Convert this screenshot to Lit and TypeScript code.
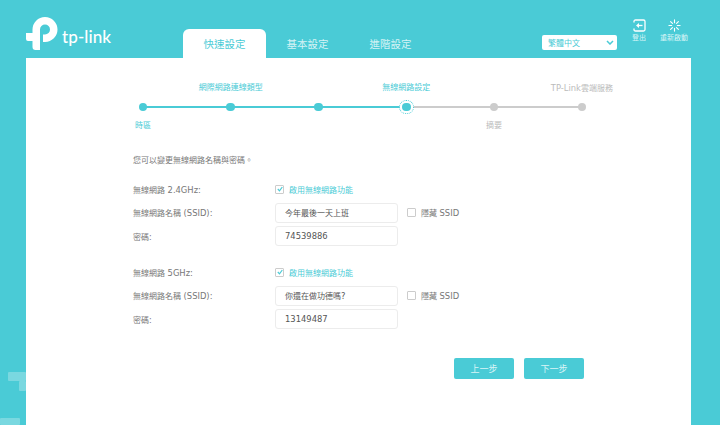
import { LitElement, html, css } from "lit";
import { customElement } from "lit/decorators.js";

const steps = [
  { top: "", bottom: "時區", state: "done" },
  { top: "網際網路連線類型", bottom: "", state: "done" },
  { top: "", bottom: "", state: "done" },
  { top: "無線網路設定", bottom: "", state: "current" },
  { top: "", bottom: "摘要", state: "todo" },
  { top: "TP-Link雲端服務", bottom: "", state: "todo" },
];

const bands = [
  { label: "無線網路 2.4GHz:", ssid: "今年最後一天上班", pass: "74539886" },
  { label: "無線網路 5GHz:", ssid: "你還在做功德嗎?", pass: "13149487" },
];

/* Latin runs are set slightly larger than the CJK ones, as in the reference. */
const mix = (t: string) =>
  t.split(/([\x21-\x7e][\x20-\x7e]*)/).map((p, i) => (i % 2 ? html`<span class="lat">${p}</span>` : p));

@customElement("app-root")
export class AppRoot extends LitElement {
  static styles = css`
    :host {
      display: block;
      position: relative;
      width: 720px;
      height: 425px;
      overflow: hidden;
      background: #4acbd6;
      font-family: "DejaVu Sans", "Noto Sans CJK TC", sans-serif;
      font-size: 8px;
      color: #777;
    }
    .lat { font-size: 8.4px; }
    .deco { position: absolute; background: #7ad8e0; border-radius: 1px; }
    .d1 { left: 8px; top: 372px; width: 18px; height: 9px; }
    .d2 { left: 19px; top: 381px; width: 7px; height: 10px; }
    .d3 { left: 0; top: 418px; width: 20px; height: 7px; }

    .page { position: relative; display: flex; flex-direction: column; height: 425px; }
    header { height: 58px; display: flex; align-items: flex-end; padding-left: 26px; }
    .logo { display: flex; align-items: center; gap: 4px; align-self: flex-start; margin-top: 17px; width: 157px; height: 33px; }
    .logo svg { width: 32px; height: 33px; flex: none; }
    .logo span { font-family: "Lato", sans-serif; font-size: 17px; font-weight: 500; color: #fff; letter-spacing: 0.1px; margin-top: 6px; line-height: 20px; }
    .tabs { display: flex; height: 29px; }
    .tab { width: 83px; display: flex; align-items: center; justify-content: center; font-size: 10.5px; color: #d5f3f5; border-radius: 6px 6px 0 0; }
    .tab.active { background: #fff; color: #4acbd6; }
    .right { margin-left: auto; display: flex; align-items: flex-end; padding-right: 32px; height: 58px; }
    .lang { width: 75px; height: 15px; background: #fff; border-radius: 2px; display: flex; align-items: center; justify-content: space-between; padding: 0 3px 0 6px; box-sizing: border-box; color: #4acbd6; margin-bottom: 8px; margin-right: 12px; }
    .lang svg { width: 8px; height: 5px; }
    .act { display: flex; flex-direction: column; align-items: center; color: #d9f5f7; font-size: 7px; line-height: 8px; gap: 2px; align-self: flex-start; margin-top: 19px; }
    .act svg { width: 13px; height: 13px; }
    .act.a1 { width: 20px; margin-right: 11px; }
    .act.a2 { width: 28px; }

    main { flex: 1; background: #fff; margin: 0 29px 0 26px; padding-left: 73px; box-sizing: border-box; }
    .stepper { display: flex; margin-top: 20px; }
    .step { width: 87.8px; display: flex; flex-direction: column; align-items: center; height: 52px; }
    .lbl { height: 20px; line-height: 20px; color: #4acbd6; white-space: nowrap; flex: none; display: flex; justify-content: center; width: 0; }
    .lbl.bot { margin-top: 4px; height: 12px; line-height: 12px; }
    .todo .lbl { color: #bbb; }
    .track { height: 18px; width: 100%; display: flex; align-items: center; justify-content: center; position: relative; flex: none; }
    .dot { width: 8.5px; height: 8.5px; border-radius: 50%; background: #4acbd6; position: relative; z-index: 1; }
    .todo .dot { background: #ccc; }
    .current .dot { box-shadow: 0 0 0 2.5px #fff; }
    .current .dot::after { content: ""; position: absolute; inset: -3px; border: 1px dotted #4acbd6; border-radius: 50%; }
    .line { position: absolute; left: 50%; width: 100%; height: 2px; top: 8px; background: #4acbd6; }
    .current .line, .todo .line { background: #ccc; }
    .step:last-child .line { display: none; }

    .intro { margin: 25px 0 0 34px; line-height: 12px; }
    .band { margin: 12px 0 0 34px; display: grid; grid-template-columns: 142px 123px auto; grid-auto-rows: 20px; row-gap: 3.5px; align-items: center; }
    .band.second { margin-top: 16px; }
    .en { display: flex; align-items: center; gap: 5px; color: #4acbd6; grid-column: 2 / 4; }
    .box { width: 7px; height: 7px; border: 1px solid #ccc; border-radius: 1px; flex: none; display: flex; align-items: center; justify-content: center; background: #fff; }
    .box svg { width: 6px; height: 6px; }
    .field { width: 123px; height: 20px; border: 1px solid #ececec; border-radius: 3px; box-sizing: border-box; padding-left: 9px; display: flex; align-items: center; color: #555; white-space: pre; }
    .hide { display: flex; align-items: center; gap: 5px; margin-left: 9px; }
    .actions { display: flex; gap: 10px; margin: 29px 0 0 355px; }
    .btn { width: 60px; height: 21px; border-radius: 2px; background: #4acbd6; color: #d9f5f7; font-size: 9px; display: flex; align-items: center; justify-content: center; }
  `;

  render() {
    return html`
      <div class="deco d1"></div><div class="deco d2"></div><div class="deco d3"></div>
      <div class="page">
        <header>
          <div class="logo">
            <svg viewBox="0 0 32 33">
              <path fill="#fff" d="M0 16H6.500V12.500A12.500 12.500 0 1 1 19 25H17V17.500H19A5 5 0 1 0 14 12.500V33H9.500Q6.500 33 6.500 30V24H2Q0 24 0 22Z"/>
            </svg>
            <span>tp-link</span>
          </div>
          <nav class="tabs">
            <div class="tab active">快速設定</div>
            <div class="tab">基本設定</div>
            <div class="tab">進階設定</div>
          </nav>
          <div class="right">
            <div class="lang">
              <span>繁體中文</span>
              <svg viewBox="0 0 8 5"><path d="M1 1l3 3 3-3" fill="none" stroke="#4acbd6" stroke-width="1.500"/></svg>
            </div>
            <div class="act a1">
              <svg viewBox="0 0 13 13" fill="none" stroke="#fff" stroke-width="1.300">
                <path d="M1 3.500V2.500Q1 1 2.500 1h8Q12 1 12 2.500v8q0 1.500-1.500 1.500h-8Q1 12 1 10.500V9.500"/>
                <path d="M9.500 6.500H5"/><path fill="#fff" stroke="none" d="M3 6.500l3-2.500v5z"/>
              </svg>
              <span>登出</span>
            </div>
            <div class="act a2">
              <svg viewBox="0 0 14 14" stroke="#fff" stroke-width="1.200" fill="none" stroke-linecap="round">
                <path d="M7 1v3M7 10v3M1 7h3M10 7h3M2.800 2.800l2 2M9.200 9.200l2 2M11.200 2.800l-2 2M4.800 9.200l-2 2"/>
              </svg>
              <span>重新啟動</span>
            </div>
          </div>
        </header>
        <main>
          <div class="stepper">
            ${steps.map(
              (s) => html`<div class="step ${s.state}">
                <div class="lbl"><span>${mix(s.top)}</span></div>
                <div class="track"><div class="line"></div><div class="dot"></div></div>
                <div class="lbl bot"><span>${s.bottom}</span></div>
              </div>`
            )}
          </div>
          <div class="intro">您可以變更無線網路名稱與密碼。</div>
          ${bands.map(
            (b, i) => html`<div class="band ${i ? "second" : ""}">
              <div>${mix(b.label)}</div>
              <div class="en">
                <span class="box"><svg viewBox="0 0 6 6"><path d="M.8 3l1.700 1.800L5.300 1" fill="none" stroke="#4acbd6" stroke-width="1.200"/></svg></span>
                <span>啟用無線網路功能</span>
              </div>
              <div>${mix("無線網路名稱 (SSID):")}</div>
              <div class="field">${mix(b.ssid)}</div>
              <div class="hide"><span class="box"></span><span>${mix("隱藏 SSID")}</span></div>
              <div>密碼:</div>
              <div class="field">${mix(b.pass)}</div>
            </div>`
          )}
          <div class="actions">
            <div class="btn">上一步</div>
            <div class="btn">下一步</div>
          </div>
        </main>
      </div>
    `;
  }
}
